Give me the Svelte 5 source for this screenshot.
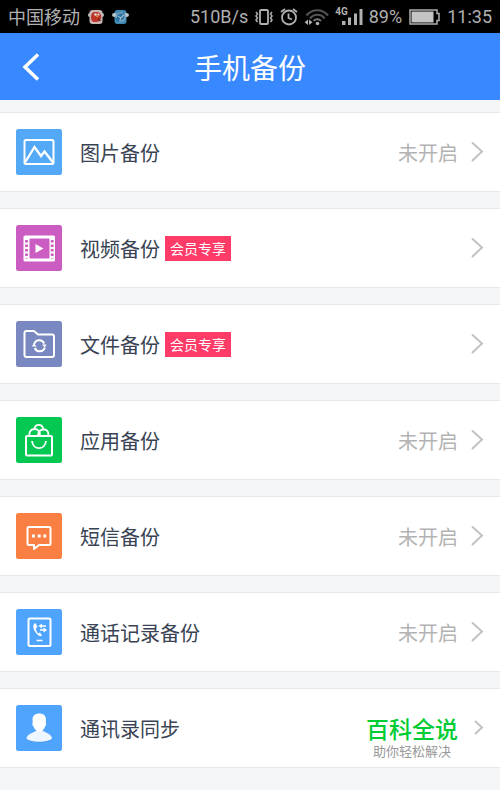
<script>
  const items = [
    { icon: 'photo', label: '图片备份', color: '#54a9f6', status: '未开启' },
    { icon: 'video', label: '视频备份', color: '#cb5cc1', member: true },
    { icon: 'file', label: '文件备份', color: '#7988c0', member: true },
    { icon: 'app', label: '应用备份', color: '#05c853', status: '未开启' },
    { icon: 'sms', label: '短信备份', color: '#fa7f42', status: '未开启' },
    { icon: 'calls', label: '通话记录备份', color: '#4fa5fd', status: '未开启' },
    { icon: 'contact', label: '通讯录同步', color: '#4fa5fd', brand: true }
  ];
</script>

<div class="page">
  <div class="statusbar">
    <div class="group">
      <span class="carrier">中国移动</span>
      <svg width="16" height="16" viewBox="0 0 16 16" aria-hidden="true">
        <rect x="1.5" y="1" width="13" height="14" rx="3" fill="#c9b5b2" />
        <circle cx="2" cy="6" r="2" fill="#c4bcbc" /><circle cx="14" cy="6" r="2" fill="#c4bcbc" />
        <path d="M3 8C3 4 5 2.500 8 3C12 2.500 14 6 13 9C12.500 12 10 13.500 7 13C4 13 3 11 3 8Z" fill="#bd3428" />
        <circle cx="7.500" cy="5.500" r="1.300" fill="#ddd" /><circle cx="10.500" cy="5.500" r="1.100" fill="#ddd" />
        <path d="M7.500 6.500L11 6.500L9 8.500Z" fill="#dda04b" />
        <path d="M10 9L13 12L11 12Z" fill="#321" />
      </svg>
      <svg width="17" height="16" viewBox="0 0 17 16" aria-hidden="true">
        <rect x="2.500" y="1" width="12" height="14" rx="3" fill="#3f8ab5" />
        <ellipse cx="2.500" cy="6" rx="2.500" ry="2" fill="#b9c8ce" /><ellipse cx="14.500" cy="6" rx="2.500" ry="2" fill="#b9c8ce" />
        <circle cx="8.500" cy="8" r="5" fill="#2a70a4" />
        <path d="M4 9C4 5 7 3 11 4M13 6C14 10 11 13 7 12M6 7L9 9L12 5.500M9 9L8 11" fill="none" stroke="#94b6c4" stroke-width="1.200" />
      </svg>
    </div>
    <div class="group system">
      <span>510B/s</span>
      <svg width="20" height="18" viewBox="0 0 20 18" aria-hidden="true">
        <rect x="6" y="2" width="8" height="14" rx="1" fill="none" stroke="currentColor" stroke-width="1.800" />
        <path d="M2 4L3.500 6L2 8L3.500 10L2 12L3.500 14M18 4L16.500 6L18 8L16.500 10L18 12L16.500 14" fill="none" stroke="currentColor" stroke-width="1.500" />
      </svg>
      <svg width="18" height="18" viewBox="0 0 18 18" aria-hidden="true">
        <circle cx="9" cy="9.500" r="7" fill="none" stroke="currentColor" stroke-width="1.800" />
        <path d="M1 4L5 1M17 4L13 1M8.500 5.500V10L12 11.500" fill="none" stroke="currentColor" stroke-width="1.800" />
      </svg>
      <svg width="25" height="18" viewBox="0 0 25 18" aria-hidden="true">
        <path d="M2.500 7.500C8 .500 18.500 .500 24 7.500M6 10.500C10 5.500 17 5.500 20.500 10.500" fill="none" stroke="#555" stroke-width="2.200" />
        <path d="M9.500 13C11.500 10.500 15 10.500 17 13" fill="none" stroke="#777" stroke-width="2" />
        <circle cx="13.500" cy="15.500" r="1.800" fill="currentColor" />
        <path d="M4 11.500V17L.500 14.200ZM5 11.500V17L8.500 14.200Z" fill="currentColor" />
      </svg>
      <div class="signal">
        <span>4G</span>
        <svg width="21" height="18" viewBox="0 0 21 18" aria-hidden="true">
          <path d="M0 13H3.500V17H0ZM6 9.500H9V17H6ZM12 5.500H15V17H12ZM17.500 1H20.500V17H17.500Z" fill="currentColor" />
        </svg>
      </div>
      <span>89%</span>
      <svg class="battery" width="31" height="16" viewBox="0 0 31 16" aria-hidden="true">
        <path d="M1 1H28V4.500H30V11.500H28V15H1Z" fill="none" stroke="currentColor" stroke-width="1.500" />
        <rect x="2.500" y="2.500" width="22" height="11" fill="#c4c4c4" />
      </svg>
      <span>11:35</span>
    </div>
  </div>

  <header>
    <button class="back" aria-label="返回">
      <svg width="18" height="28" viewBox="0 0 18 28" aria-hidden="true">
        <path d="M16 1.500L3 14L16 26.500" fill="none" stroke="#fff" stroke-width="3.500" />
      </svg>
    </button>
    <h1>手机备份</h1>
  </header>

  <main>
    {#each items as item}
      <button class="row">
        <svg width="46" height="46" viewBox="0 0 46 46" fill="none" stroke="#fff" stroke-width="2" stroke-linejoin="round" aria-hidden="true">
          <rect width="46" height="46" rx="2.500" fill={item.color} stroke="none" />
          {#if item.icon === 'photo'}
            <rect x="8.500" y="11" width="29" height="24" rx="1.500" />
            <path d="M9 33.500L18.500 18L25 27L28.500 22.500L37 33.500" stroke-width="2.300" stroke-linejoin="miter" />
          {:else if item.icon === 'video'}
            <rect x="7.500" y="10.500" width="31.500" height="26" rx="1.500" fill="#fff" stroke="none" />
            <rect x="13.500" y="13.500" width="20" height="20" rx="1" fill={item.color} stroke="none" />
            <path d="M19.500 19L27.500 23.500L19.500 28Z" fill="#fff" stroke="none" />
            <path d="M10.500 15V33.500M36.200 15V33.500" stroke={item.color} stroke-width="2.800" stroke-dasharray="2.600 1.900" />
          {:else if item.icon === 'file'}
            <path d="M8.500 12Q8.500 10 10.500 10H18L22 13.500H36Q38 13.500 38 15.500V34Q38 36 36 36H10.500Q8.500 36 8.500 34Z" />
            <path d="M18.200 23A5.300 5.300 0 0 1 28.200 22.500M28.800 26.500A5.300 5.300 0 0 1 18.800 27" />
            <path d="M26 23.500L30.500 23.500L28.800 26.500ZM16 25.500L17.800 22L20.500 25.500Z" fill="#fff" stroke="none" />
          {:else if item.icon === 'app'}
            <rect x="10" y="19" width="26" height="19.500" rx="1" />
            <path d="M13.500 19C12.500 15 15 12 18.500 12C22 12 24 15 24 18.500M22 18.500C22 14.500 25 12 28.500 12.500C32 13 33 16 32 19M18.500 12C19 6.500 26.500 6.500 27 12M16 24C17 33.500 29 33.500 30 24" stroke-width="1.900" />
          {:else if item.icon === 'sms'}
            <path d="M13 14H33Q34.500 14 34.500 15.500V30.500Q34.500 32 33 32H23L18 36V32H13Q11.500 32 11.500 30.500V15.500Q11.500 14 13 14Z" />
            <path d="M16 21.500H19V24.500H16ZM21.700 21.500H24.700V24.500H21.700ZM27.300 21.500H30.300V24.500H27.300Z" fill="#fff" stroke="none" />
          {:else if item.icon === 'calls'}
            <rect x="12.500" y="9.500" width="22" height="27.500" rx="1.500" />
            <path d="M19.500 14C16.500 15 17 19.500 19 22.500C21 26 24 28.500 26 26.500L24 23.500L22 24.500C20.500 22.500 20 21 20 19L21.500 18Z" fill="#fff" stroke="none" />
            <path d="M24 17H30M24 21H30M20.500 31.500H26.500" stroke-width="1.700" />
            <path d="M22.500 17L26 14.500V19.500ZM31 21L27.500 18.500V23.500Z" fill="#fff" stroke="none" />
          {:else}
            <path d="M11 34C12 38.500 35 38.500 36 34C35 29.500 30.500 29 26.500 26H20.500C16.500 29 11.500 29.500 11 34Z" fill="#3b8fe5" stroke="none" />
            <path d="M10.500 33C11.500 38 35 38 36 33C35 29 30.500 28 26.500 25.500H20.500C16.500 28 11.500 29 10.500 33Z" fill="#eef6ff" stroke="none" />
            <path d="M16.500 14.500C16.500 10.500 19.500 8.500 23.200 8.500C27 8.500 30 10.500 30 14.500L29.800 18C30.500 18 30 21 29 21.500C28.500 23.500 27 25 26.500 25.500Q23.500 28 20.500 25.500C19 24.500 18 23 17.500 21.500C16.500 21 16 18 16.700 18Z" fill="#fff" stroke="none" />
          {/if}
        </svg>
        <span class="label">{item.label}</span>
        {#if item.member}<span class="badge">会员专享</span>{/if}
        <span class="end">
          {#if item.status}<span class="status">{item.status}</span>{/if}
          {#if item.brand}
            <span class="brand"><strong>百科全说</strong><small>助你轻松解决</small></span>
          {/if}
          <svg width="14" height="22" viewBox="0 0 14 22" aria-hidden="true">
            <path d={item.brand ? 'M5 4L12 10.500L5 17' : 'M2 1.500L12 10.500L2 20'} fill="none" stroke="#c2c2c2" stroke-width="2" />
          </svg>
        </span>
      </button>
    {/each}
  </main>
</div>

<style>
  :global(body) {
    margin: 0;
    background: #f3f5f7;
  }
  .page {
    font-family: Roboto, "Noto Sans CJK SC", sans-serif;
  }
  svg {
    display: block;
    flex: none;
  }
  button {
    border: 0;
    font: inherit;
    text-align: left;
    cursor: pointer;
  }
  .statusbar {
    display: flex;
    align-items: center;
    justify-content: space-between;
    height: 33px;
    padding: 0 8px;
    background: #000;
    color: #b0b0b0;
    font-size: 18px;
    line-height: 32px;
    white-space: nowrap;
  }
  .group {
    display: flex;
    align-items: center;
    gap: 8px;
  }
  .carrier {
    padding-top: 2px;
  }
  .system {
    gap: 6px;
  }
  .system > span {
    padding-top: 1px;
  }
  .battery {
    margin: 0 1px;
  }
  .signal {
    display: flex;
    align-items: center;
  }
  .signal span {
    align-self: flex-start;
    margin-right: -6px;
    font-size: 10px;
    font-weight: 700;
    line-height: 8px;
  }
  header {
    display: grid;
    grid-template-columns: 64px 1fr 64px;
    align-items: center;
    height: 67px;
    background: #3888ff;
    color: #fff;
  }
  .back {
    display: flex;
    padding: 16px 22px;
    background: none;
  }
  h1 {
    margin: 0;
    padding-top: 6px;
    font-size: 28px;
    font-weight: 400;
    line-height: 40px;
    text-align: center;
  }
  main {
    display: flex;
    flex-direction: column;
    gap: 16px;
    padding: 12px 0 22px;
  }
  .row {
    display: flex;
    align-items: center;
    box-sizing: border-box;
    width: 100%;
    height: 80px;
    padding: 0 16px;
    border-top: 1px solid #e6e9eb;
    border-bottom: 1px solid #e6e9eb;
    background: #fff;
  }
  .label,
  .status {
    padding-top: 4px;
    font-size: 20px;
    line-height: 28px;
  }
  .label {
    margin-left: 18px;
    color: #394353;
  }
  .status {
    color: #b3b3b3;
  }
  .badge {
    margin-left: 5px;
    padding: 1px 5px 0;
    background: #ff3b68;
    color: #fff;
    font-size: 14px;
    line-height: 24px;
  }
  .end {
    display: flex;
    align-items: center;
    gap: 12px;
    margin-left: auto;
  }
  .brand {
    display: flex;
    flex-direction: column;
    align-items: center;
    padding-top: 24px;
  }
  .brand strong {
    color: #0c3;
    font-size: 23px;
    font-weight: 500;
    line-height: 24px;
  }
  .brand small {
    color: #999;
    font-size: 13px;
    line-height: 18px;
  }
</style>
